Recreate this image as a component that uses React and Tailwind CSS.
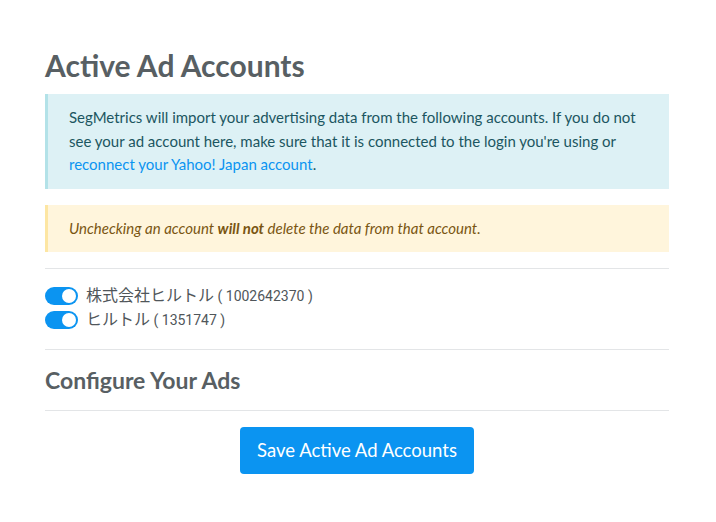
import React, { useState } from 'react';

const accounts = [
  { id: '1002642370', name: '株式会社ヒルトル' },
  { id: '1351747', name: 'ヒルトル' },
];

const Toggle = ({ on, onChange }) => (
  <button
    type="button"
    onClick={onChange}
    className={`relative inline-flex h-[18px] w-[33px] shrink-0 items-center rounded-full transition-colors ${
      on ? 'bg-[#0b94f1]' : 'bg-[#c9ced3]'
    }`}
  >
    <span
      className={`absolute h-[14px] w-[14px] rounded-full bg-white transition-all ${
        on ? 'left-[17px]' : 'left-[2px]'
      }`}
    />
  </button>
);

const App = () => {
  const [active, setActive] = useState({ '1002642370': true, '1351747': true });

  const toggle = (id) => setActive((prev) => ({ ...prev, [id]: !prev[id] }));

  return (
    <div className="min-h-[522px] bg-white font-['Lato','Noto_Sans',sans-serif]">
      <div className="ml-[45px] w-[624px] pt-[46px] pb-[48px]">
        <h1 className="mb-[10px] text-[30px] font-bold leading-[38px] text-[#585f63]">
          Active Ad Accounts
        </h1>

        <div className="mb-[16px] border-l-[3px] border-[#b3e2e8] bg-[#ddf1f5] px-[21px] py-[12px] text-[15px] leading-[23.5px] text-[#1b5661]">
          SegMetrics will import your advertising data from the following accounts. If you do not
          see your ad account here, make sure that it is connected to the login you're using or{' '}
          <a href="#" className="text-[#0b94f1]">reconnect your Yahoo! Japan account</a>.
        </div>

        <div className="mb-[16px] border-l-[3px] border-[#fde6a3] bg-[#fff5dc] px-[21px] py-[12px] text-[15px] italic leading-[23.5px] text-[#7a5512]">
          Unchecking an account <strong className="font-bold">will not</strong> delete the data from that account.
        </div>

        <div className="border-t border-[#e3e5e7] pt-[18px] pb-[20px]">
          <div className="flex flex-col gap-[6px]">
            {accounts.map((a) => (
              <label key={a.id} className="flex items-center gap-[8px] font-['Roboto','Noto_Sans_CJK_JP',sans-serif] text-[16px] leading-[18px] text-[#50565a]">
                <Toggle on={active[a.id]} onChange={() => toggle(a.id)} />
                <span>
                  {a.name}
                  <span className="text-[14px]"> ( {a.id} )</span>
                </span>
              </label>
            ))}
          </div>
        </div>

        <div className="border-t border-[#e3e5e7] py-[15px]">
          <h2 className="text-[23px] font-bold leading-[30px] text-[#585f63]">Configure Your Ads</h2>
        </div>

        <div className="flex justify-center border-t border-[#e3e5e7] pt-[16px]">
          <button
            type="button"
            className="h-[47px] w-[234px] rounded-[4px] bg-[#0b94f1] text-[18.5px] text-white"
          >
            Save Active Ad Accounts
          </button>
        </div>
      </div>
    </div>
  );
};

export default App;
